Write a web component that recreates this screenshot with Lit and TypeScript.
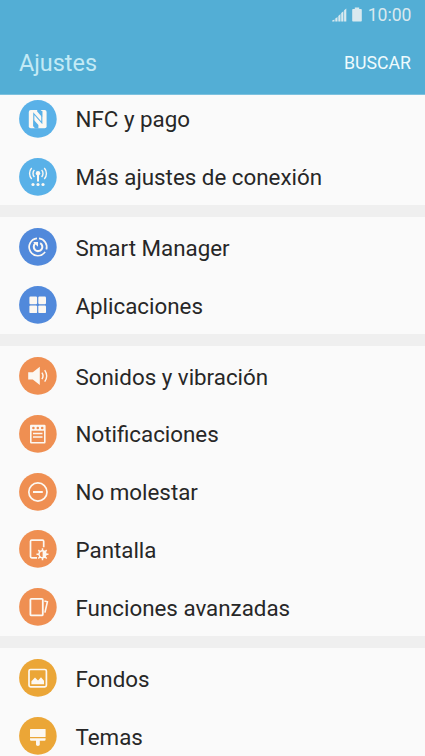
import { html, svg, css, LitElement, SVGTemplateResult } from 'lit';
import { customElement, property } from 'lit/decorators.js';

type Tone = 'sky' | 'blue' | 'orange' | 'amber';

interface Item {
  icon: string;
  label: string;
}

interface Group {
  tone: Tone;
  items: Item[];
}

const groups: Group[] = [
  {
    tone: 'sky',
    items: [
      { icon: 'nfc', label: 'NFC y pago' },
      { icon: 'antenna', label: 'Más ajustes de conexión' },
    ],
  },
  {
    tone: 'blue',
    items: [
      { icon: 'manager', label: 'Smart Manager' },
      { icon: 'apps', label: 'Aplicaciones' },
    ],
  },
  {
    tone: 'orange',
    items: [
      { icon: 'sound', label: 'Sonidos y vibración' },
      { icon: 'notifications', label: 'Notificaciones' },
      { icon: 'dnd', label: 'No molestar' },
      { icon: 'display', label: 'Pantalla' },
      { icon: 'advanced', label: 'Funciones avanzadas' },
    ],
  },
  {
    tone: 'amber',
    items: [
      { icon: 'wallpaper', label: 'Fondos' },
      { icon: 'themes', label: 'Temas' },
    ],
  },
];

// All icons share a 38x38 box, the size of the round badge.
const icons: Record<string, SVGTemplateResult> = {
  nfc: svg`
    <rect class="fill" x="9.8" y="10" width="17.8" height="18.2" rx="2" />
    <path class="hole" d="M18.2 9.8H21.4L23.2 11.6V17.2L18.2 11.6Z" />
    <path class="hole" d="M14.4 19.6L19.4 25V28.4H16.2L14.4 26.6Z" />
    <path class="cut" d="M14.8 26V13.6L22.8 22.8V11" stroke-width="1.1" />`,
  antenna: svg`
    <circle class="fill" cx="19" cy="15.2" r="2.2" />
    <path class="line" d="M19 16V23.4" stroke-width="2" />
    <path class="line" d="M15.4 12.1A4.8 4.8 0 0 0 15.4 18.9M22.6 12.1A4.8 4.8 0 0 1 22.6 18.9M12.7 10A8.2 8.2 0 0 0 12.7 21M25.3 10A8.2 8.2 0 0 1 25.3 21" stroke-width="1.4" />
    <circle class="fill" cx="14" cy="26.5" r="1.6" />
    <circle class="fill" cx="19" cy="26.5" r="1.6" />
    <circle class="fill" cx="24" cy="26.5" r="1.6" />`,
  manager: svg`
    <path class="line" d="M18 10.4A8.7 8.7 0 1 0 26.1 23.9" stroke-width="1.7" />
    <path class="line" d="M20 10.4A8.7 8.7 0 0 1 27.4 21.4" stroke-width="1.7" />
    <path class="line" d="M21.2 15.1A4.3 4.3 0 1 1 16.2 15.6" stroke-width="2" />
    <path class="fill" d="M14.2 13.9H19V18.8L17.4 17.2Z" />`,
  apps: svg`
    <rect class="fill" x="10.4" y="10.6" width="7.7" height="7.7" rx="1.2" />
    <rect class="fill" x="19.3" y="10.6" width="7.7" height="7.7" rx="1.2" />
    <rect class="fill" x="10.4" y="19.4" width="7.7" height="7.7" rx="1.2" />
    <rect class="fill" x="19.3" y="19.4" width="7.7" height="7.7" rx="1.2" />`,
  sound: svg`
    <path class="fill" d="M9.2 15.2H13.8L20.8 9.8V28L13.8 22.6H9.2Z" />
    <path class="line" d="M22.9 15.7Q25.2 18.9 22.9 22.1M25.7 13.1Q29.7 18.9 25.7 24.7" stroke-width="1.4" />`,
  notifications: svg`
    <path class="fill" fill-rule="evenodd" d="M12 9.8H25.4Q26.6 9.8 26.6 11V27.3Q26.6 28.5 25.4 28.5H12.2Q11 28.5 11 27.3V11Q11 9.8 12 9.8ZM12.6 15.8V26.9H25V15.8Z" />
    <circle class="hole" cx="14.4" cy="13" r="1.3" />
    <circle class="hole" cx="18.8" cy="13" r="1.3" />
    <circle class="hole" cx="23.2" cy="13" r="1.3" />
    <path class="line" d="M14 18.5H23.5M14 21.9H23.5" stroke-width="1.5" />`,
  dnd: svg`
    <circle class="line" cx="18.9" cy="19" r="9.1" stroke-width="1.7" />
    <path class="line" d="M14 19H23.8" stroke-width="2" />`,
  display: svg`
    <path class="line" d="M18 27.8H12.8Q11.5 27.8 11.5 26.5V11.3Q11.5 10.2 12.8 10.2H23.4Q24.7 10.2 24.7 11.3V17.3" stroke-width="1.7" />
    <path class="line" d="M23.5 18.3V30.3M17.5 24.3H29.5M19.3 20.1L27.7 28.5M27.7 20.1L19.3 28.5" stroke-width="1.5" />
    <circle class="fill" cx="23.5" cy="24.3" r="4.2" />
    <path class="hole" d="M23.6 21.5A2.8 2.8 0 0 0 23.6 27.1Z" />`,
  advanced: svg`
    <rect class="line" x="11.4" y="10.8" width="12.4" height="16.6" rx="1" stroke-width="1.8" />
    <path class="line" d="M25.4 12.9L28.4 13.7L25.9 24.6" stroke-width="1.6" />`,
  wallpaper: svg`
    <rect class="line" x="10" y="10.5" width="17.4" height="17.4" rx="1.6" stroke-width="1.7" />
    <path class="fill" d="M12.4 25.3V22.2L16 18.6L19 21.4L22 18.2L25 21.8V25.3Z" />`,
  themes: svg`
    <rect class="fill" x="11" y="12" width="15.6" height="8.1" rx="0.6" />
    <path class="fill" d="M11 21.2H26.6V22.6Q26.6 23.8 25.4 23.8H20.8V27.6Q20.8 29 18.9 29Q17 29 17 27.6V23.8H12.2Q11 23.8 11 22.6Z" />`,
};

@customElement('settings-icon')
export class SettingsIcon extends LitElement {
  @property()
  name = '';

  @property()
  tone: Tone = 'sky';

  static styles = css`
    :host {
      display: block;
      width: 38px;
      height: 38px;
      flex: none;
    }
    svg {
      display: block;
    }
    .sky {
      color: #59b1e8;
    }
    .blue {
      color: #5189db;
    }
    .orange {
      color: #ef8f52;
    }
    .amber {
      color: #eba637;
    }
    .badge,
    .hole {
      fill: currentColor;
    }
    .fill {
      fill: #fcf8f2;
    }
    .line {
      fill: none;
      stroke: #fcf8f2;
    }
    .cut {
      fill: none;
      stroke: currentColor;
    }
  `;

  render() {
    return html`
      <svg class=${this.tone} width="38" height="38" viewBox="0 0 38 38">
        <circle class="badge" cx="18.9" cy="18.9" r="18.8" />
        ${icons[this.name]}
      </svg>
    `;
  }
}

@customElement('app-root')
export class AppRoot extends LitElement {
  static styles = css`
    :host {
      display: flex;
      flex-direction: column;
      height: 756px;
      overflow: hidden;
      background: #efefef;
      color: #272727;
      font-family: Roboto, sans-serif;
    }
    header {
      flex: none;
      height: 94.7px;
      background: #53aed5;
    }
    .status {
      display: flex;
      align-items: center;
      justify-content: flex-end;
      height: 30px;
      padding-right: 13.5px;
      color: #d9e9ef;
      font-size: 17.6px;
    }
    .signal {
      margin-right: 5px;
    }
    .battery {
      margin-top: -1px;
      margin-right: 6px;
    }
    .bar {
      display: flex;
      align-items: center;
      justify-content: space-between;
      padding: 18px 14px 0 19px;
      line-height: 30px;
    }
    .title {
      color: #c3eaf5;
      font-size: 23.4px;
    }
    .search {
      color: #effbfd;
      font-size: 17.7px;
    }
    main {
      flex: none;
      display: flex;
      flex-direction: column;
      gap: 12px;
    }
    section {
      padding-top: 0.8px;
      background: #fafafa;
    }
    section:first-child {
      padding-top: 0;
      margin-top: -5px;
      clip-path: inset(5px 0 0);
    }
    .row {
      display: flex;
      align-items: center;
      gap: 18.5px;
      height: 57.9px;
      padding-left: 19px;
    }
    .label {
      padding-top: 1.6px;
      font-size: 22.35px;
      line-height: 28px;
      white-space: nowrap;
    }
  `;

  renderItem(item: Item, tone: Tone) {
    return html`
      <div class="row">
        <settings-icon name=${item.icon} tone=${tone}></settings-icon>
        <span class="label">${item.label}</span>
      </div>
    `;
  }

  render() {
    return html`
      <header>
        <div class="status">
          <svg class="signal" width="15" height="14" viewBox="0 0 15 14" fill="currentColor">
            <path d="M0.2 13.5V12.5L2.5 11.5V13.5ZM3.3 13.5V10.5L5.5 9V13.5ZM6.3 13.5V8L8.5 6V13.5ZM9.2 13.5V5L11.4 3.2V13.5ZM12.1 13.5V2.2L14.3 0.5V13.5Z" />
          </svg>
          <svg class="battery" width="10" height="15" viewBox="0 0 10 15" fill="currentColor">
            <path d="M1 2H2.8V0.5H7.2V2H9Q9.8 2 9.8 2.8V13.7Q9.8 14.5 9 14.5H1Q0.2 14.5 0.2 13.7V2.8Q0.2 2 1 2Z" />
          </svg>
          <span>10:00</span>
        </div>
        <div class="bar">
          <span class="title">Ajustes</span>
          <span class="search">BUSCAR</span>
        </div>
      </header>
      <main>
        ${groups.map(
          (group) => html`
            <section>${group.items.map((item) => this.renderItem(item, group.tone))}</section>
          `
        )}
      </main>
    `;
  }
}

declare global {
  interface HTMLElementTagNameMap {
    'settings-icon': SettingsIcon;
    'app-root': AppRoot;
  }
}
